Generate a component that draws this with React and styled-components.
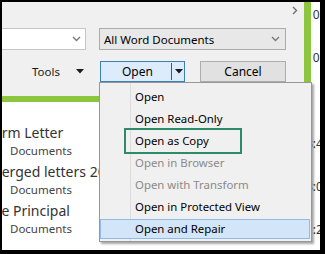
import React from 'react'
import styled, { createGlobalStyle } from 'styled-components'

const Global = createGlobalStyle`
    html, body {
        margin: 0;
        padding: 0;
        background: #ffffff;
    }
    * {
        box-sizing: border-box;
    }
`

const menuItems = [
    { label: 'Open' },
    { label: 'Open Read-Only' },
    { label: 'Open as Copy' },
    { label: 'Open in Browser', disabled: true },
    { label: 'Open with Transform', disabled: true },
    { label: 'Open in Protected View' },
    { label: 'Open and Repair', active: true },
]

const files = [
    { name: 'Form Letter', shift: -16 },
    { name: 'Merged letters 2014', shift: -13 },
    { name: 'The Principal', shift: -17 },
]

const stamps = ['10:32 AM', '10:15 AM', '', '3:41 PM', '3:05 PM', '1:22 PM']

function Chevron() {
    return (
        <svg width="9" height="6" viewBox="0 0 9 6">
            <path d="M1 1 L4.5 4.5 L8 1" fill="none" stroke="#7a7a7a" strokeWidth="1.4" />
        </svg>
    )
}

function Caret() {
    return (
        <svg width="8" height="5" viewBox="0 0 8 5">
            <path d="M0 0 H8 L4 4.5 Z" fill="#1a1a1a" />
        </svg>
    )
}

function App() {
    return (
        <Frame>
            <Global />
            <Left>
                <Panel>
                    <TopRow>
                        <svg width="6" height="9" viewBox="0 0 6 9">
                            <path d="M1 1 L4.5 4.5 L1 8" fill="none" stroke="#6e6e6e" strokeWidth="1.4" />
                        </svg>
                    </TopRow>
                    <FieldRow>
                        <Field>
                            <span />
                            <Chevron />
                        </Field>
                        <Select>
                            <span>All Word Documents</span>
                            <Chevron />
                        </Select>
                    </FieldRow>
                    <ButtonRow>
                        <Tools>
                            <span>Tools</span>
                            <Caret />
                        </Tools>
                        <SplitButton>
                            <span>Open</span>
                            <Divider />
                            <Caret />
                        </SplitButton>
                        <Button>Cancel</Button>
                    </ButtonRow>
                </Panel>
                <FileList>
                    {files.map((f) => (
                        <FileItem key={f.name}>
                            <FileName $shift={f.shift}>{f.name}</FileName>
                            <FilePlace>Documents</FilePlace>
                        </FileItem>
                    ))}
                </FileList>
            </Left>
            <Strip>
                {stamps.map((s, i) => (
                    <Stamp key={i}>{s}</Stamp>
                ))}
            </Strip>

            <Menu>
                {menuItems.map((m) => (
                    <Item key={m.label} $disabled={m.disabled} $active={m.active}>
                        {m.label}
                    </Item>
                ))}
                <Callout />
            </Menu>
        </Frame>
    )
}

export default App


const Frame = styled.div`

    position: relative;
    width: 325px;
    height: 254px;
    border-style: solid;
    border-color: #000;
    border-width: 2px 5px 4px 2px;
    display: flex;
    overflow: hidden;
    background: #fff;
    font-family: "Noto Sans", "Open Sans", sans-serif;
    font-size: 12px;
    color: #1a1a1a;

`

const Left = styled.div`

    width: 309px;
    display: flex;
    flex-direction: column;

`

const Panel = styled.div`

    height: 100px;
    background: #f0f0f0;
    border-right: 7px solid #8cc63f;
    border-bottom: 6px solid #8cc63f;
    padding-right: 18px;

`

const TopRow = styled.div`

    height: 26px;
    display: flex;
    justify-content: flex-end;
    padding-top: 4px;
    margin-right: -12px;

`

const FieldRow = styled.div`

    display: flex;
    gap: 13px;
    height: 22px;

`

const Field = styled.div`

    width: 84px;
    height: 22px;
    background: #fff;
    border: 1px solid #c6c6c6;
    border-left: none;
    display: flex;
    align-items: center;
    justify-content: space-between;
    padding-right: 4px;

`

const Select = styled.div`

    flex: 1;
    height: 22px;
    background: #e8e8e8;
    border: 1px solid #acacac;
    display: flex;
    align-items: center;
    justify-content: space-between;
    padding: 0 5px 0 4px;
    font-size: 11.5px;
    color: #000;

`

const ButtonRow = styled.div`

    display: flex;
    align-items: center;
    height: 21px;
    margin-top: 11px;

`

const Tools = styled.div`

    width: 98px;
    display: flex;
    align-items: center;
    padding-left: 30px;
    gap: 16px;
    font-size: 11.5px;

`

const Button = styled.div`

    width: 86px;
    height: 21px;
    margin-left: 15px;
    border: 1px solid #adadad;
    background: #e1e1e1;
    display: flex;
    align-items: center;
    justify-content: center;
    font-size: 12px;
    color: #000;

`

const SplitButton = styled(Button)`

    width: 85px;
    margin-left: 0;
    border-color: #3c7fb1;
    background: #dcecfc;
    justify-content: flex-start;
    padding-left: 21px;

    span {
        width: 49px;
    }

`

const Divider = styled.div`

    width: 1px;
    height: 17px;
    background: #555;
    margin-right: 3px;

`

const FileList = styled.div`

    flex: 1;
    background: #fff;
    padding-top: 22px;
    display: flex;
    flex-direction: column;
    gap: 4px;
    overflow: hidden;

`

const FileItem = styled.div`

    display: flex;
    flex-direction: column;

`

const FileName = styled.div`

    font-size: 14px;
    line-height: 18px;
    white-space: nowrap;
    color: #333;
    margin-left: ${(p) => p.$shift}px;

`

const FilePlace = styled.div`

    font-size: 11.5px;
    line-height: 17px;
    color: #444;
    padding-left: 8px;

`

const Strip = styled.div`

    width: 9px;
    overflow: hidden;
    padding-top: 5px;
    display: flex;
    flex-direction: column;
    gap: 27px;

`

const Stamp = styled.div`

    height: 16px;
    line-height: 16px;
    white-space: nowrap;
    font-size: 12px;
    color: #333;
    margin-left: -5px;

`

const Menu = styled.div`

    position: absolute;
    left: 97px;
    top: 80px;
    width: 213px;
    height: 160px;
    background: #f0f0f0;
    border: 1px solid #979797;
    box-shadow: 2px 2px 2px rgba(0, 0, 0, 0.35);
    padding: 4px 1px 0 0;

    &::before {
        content: "";
        position: absolute;
        left: 30px;
        top: 0;
        bottom: 0;
        width: 1px;
        background: #dcdcdc;
    }

`

const Item = styled.div`

    position: relative;
    z-index: 1;
    height: 20px;
    margin-bottom: 2px;
    line-height: 18px;
    padding-left: 34px;
    font-size: 11.4px;
    border: 1px solid ${(p) => (p.$active ? '#90bce8' : 'transparent')};
    background: ${(p) => (p.$active ? '#d3e5f8' : 'transparent')};
    color: ${(p) => (p.$disabled ? '#8a8a8a' : '#000')};

`

const Callout = styled.div`

    position: absolute;
    z-index: 2;
    left: 24px;
    top: 45px;
    width: 118px;
    height: 26px;
    border: 2px solid #2e8b6a;

`
